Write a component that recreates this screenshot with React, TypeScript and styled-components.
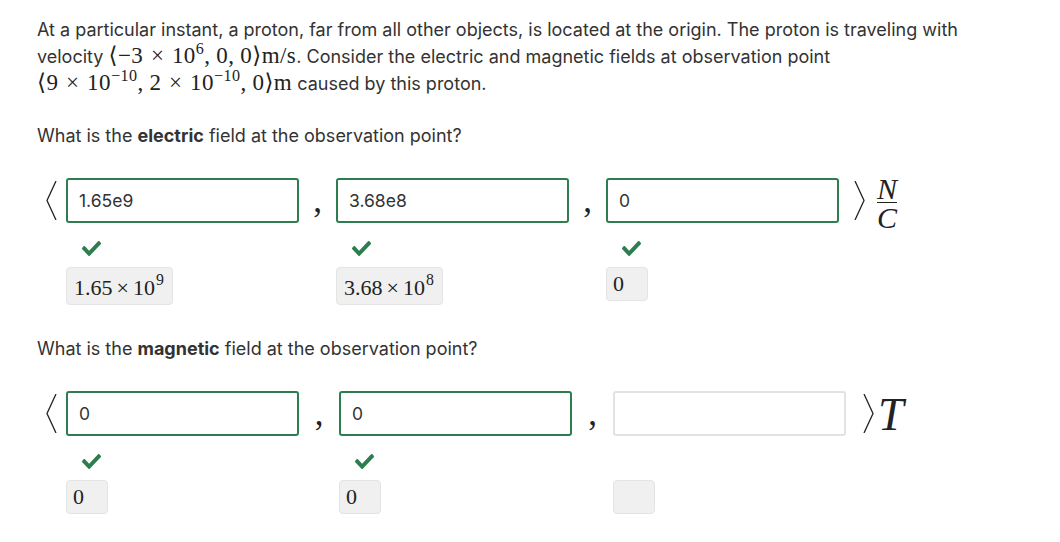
import styled, { createGlobalStyle } from 'styled-components';

const GREEN = '#2e7d4f';
const INK = '#333333';

const Global = createGlobalStyle`
    body {
        margin: 0;
        background: #ffffff;
        color: ${INK};
        font-family: Inter, 'Noto Sans', sans-serif;
    }
`;

const Page = styled.div`
    padding: 15.5px 37px 20px;
`;

const Text = styled.p`
    margin: 0;
    font-size: 18px;
    line-height: 27px;
    max-width: 960px;
`;

const M = styled.span`
    font-family: 'Liberation Serif', 'DejaVu Serif', serif;
    font-size: 23px;
    line-height: 1;
    letter-spacing: 0.02em;
    white-space: nowrap;
    color: #222;
`;

const Op = styled.span`
    margin: 0 0.33em;
`;

const Comma = styled.span`
    margin-right: 0.25em;
`;

const Sup = styled.sup`
    font-size: 0.7em;
    line-height: 0;
    vertical-align: 0.55em;
`;

const Prompt = styled.p`
    margin: 25px 0 29.5px;
    font-size: 18px;
    line-height: 27px;
    b {
        font-weight: 700;
    }
`;

const AnswerRow = styled.div`
    display: flex;
    align-items: flex-start;
    padding-bottom: 4.5px;
`;

const Delim = styled.div<{ $w: number; $pad?: number }>`
    box-sizing: border-box;
    width: ${(p) => p.$w}px;
    height: 45px;
    padding-left: ${(p) => p.$pad ?? 0}px;
    display: flex;
    align-items: center;
    justify-content: ${(p) => (p.$pad ? 'flex-start' : 'center')};
    flex-shrink: 0;
`;

const Sep = styled.div<{ $w: number }>`
    width: ${(p) => p.$w}px;
    height: 45px;
    line-height: 45px;
    text-align: center;
    font-family: 'Liberation Serif', serif;
    font-size: 35px;
    color: #222;
    flex-shrink: 0;
`;

const Field = styled.div`
    display: flex;
    flex-direction: column;
    align-items: flex-start;
`;

const Input = styled.div<{ $filled: boolean }>`
    box-sizing: border-box;
    width: 233px;
    height: 45px;
    border: 2px solid ${(p) => (p.$filled ? GREEN : '#e2e2e2')};
    border-radius: 3px;
    padding: 0 11px;
    display: flex;
    align-items: center;
    font-size: 17.5px;
    color: ${INK};
`;

const CheckWrap = styled.div<{ $hidden?: boolean }>`
    margin: 18px 0 0 16px;
    height: 15px;
    visibility: ${(p) => (p.$hidden ? 'hidden' : 'visible')};
    svg {
        display: block;
    }
`;

const Result = styled.div<{ $tall?: boolean }>`
    box-sizing: border-box;
    margin-top: 11px;
    min-width: 42px;
    height: ${(p) => (p.$tall ? 38 : 34)}px;
    padding: ${(p) => (p.$tall ? '4px 8px 0 7px' : '0 6px')};
    background: #f0f0f0;
    border: 1px solid #e4e4e4;
    border-radius: 4px;
    display: flex;
    align-items: center;
    font-family: 'Liberation Serif', serif;
    font-size: 22px;
    color: #222;
`;

const Times = styled.span`
    margin: 0 4px;
`;

const ResSup = styled.sup`
    font-size: 0.72em;
    line-height: 0;
    vertical-align: 0.62em;
    margin-left: 1px;
`;

const Unit = styled.div<{ $gap: number }>`
    height: 45px;
    margin-left: ${(p) => p.$gap}px;
    display: flex;
    align-items: center;
    font-family: 'Liberation Serif', serif;
    font-style: italic;
    color: #222;
`;

const Frac = styled.span`
    display: inline-flex;
    flex-direction: column;
    align-items: center;
    font-size: 30px;
    line-height: 22px;
    margin-top: 6px;
    padding: 0 3px;
    hr {
        width: 100%;
        margin: 2px 0 4px;
        border: 0;
        border-top: 1.5px solid #222;
    }
`;

const BigT = styled.span`
    font-size: 46px;
    line-height: 45px;
    margin-top: 2px;
`;

const Bracket = ({ right }: { right?: boolean }) => (
    <svg width="11" height="39" viewBox="0 0 11 39">
        <polyline
            points={right ? '1,0 10,19.5 1,39' : '10,0 1,19.5 10,39'}
            fill="none"
            stroke="#222"
            strokeWidth="1.3"
        />
    </svg>
);

const Check = ({ hidden }: { hidden?: boolean }) => (
    <CheckWrap $hidden={hidden}>
        <svg width="19" height="15" viewBox="0 64 512 384" preserveAspectRatio="none">
            <path
                fill={GREEN}
                d="M173.9 439.4l-166.4-166.4c-10-10-10-26.2 0-36.2l36.2-36.2c10-10 26.2-10 36.2 0L192 312.7 432.1 72.6c10-10 26.2-10 36.2 0l36.2 36.2c10 10 10 26.2 0 36.2l-294.4 294.4c-10 10-26.2 10-36.2 0z"
            />
        </svg>
    </CheckWrap>
);

type Ans = { value: string; mant?: string; exp?: string; checked: boolean };

const Answer = ({ a }: { a: Ans }) => (
    <Field>
        <Input $filled={a.value !== ''}>{a.value}</Input>
        <Check hidden={!a.checked} />
        <Result $tall={!!a.exp}>
            <span>
                {a.exp ? (
                    <>
                        {a.mant}
                        <Times>×</Times>10
                        <ResSup>{a.exp}</ResSup>
                    </>
                ) : (
                    a.value
                )}
            </span>
        </Result>
    </Field>
);

const electric: Ans[] = [
    { value: '1.65e9', mant: '1.65', exp: '9', checked: true },
    { value: '3.68e8', mant: '3.68', exp: '8', checked: true },
    { value: '0', checked: true },
];

const magnetic: Ans[] = [
    { value: '0', checked: true },
    { value: '0', checked: true },
    { value: '', checked: false },
];

export default function App() {
    return (
        <Page>
            <Global />
            <Text>
                At a particular instant, a proton, far from all other objects, is located at the origin. The
                proton is traveling with velocity{' '}
                <M>
                    ⟨−3<Op>×</Op>10<Sup>6</Sup>
                    <Comma>,</Comma>0<Comma>,</Comma>0⟩m/s
                </M>
                . Consider the electric and magnetic fields at observation point{' '}
                <M>
                    ⟨9<Op>×</Op>10<Sup>−10</Sup>
                    <Comma>,</Comma>2<Op>×</Op>10<Sup>−10</Sup>
                    <Comma>,</Comma>0⟩m
                </M>{' '}
                caused by this proton.
            </Text>

            <Prompt>
                What is the <b>electric</b> field at the observation point?
            </Prompt>
            <AnswerRow>
                <Delim $w={29}>
                    <Bracket />
                </Delim>
                <Answer a={electric[0]} />
                <Sep $w={37}>,</Sep>
                <Answer a={electric[1]} />
                <Sep $w={37}>,</Sep>
                <Answer a={electric[2]} />
                <Delim $w={26} $pad={15}>
                    <Bracket right />
                </Delim>
                <Unit $gap={9}>
                    <Frac>
                        <span>N</span>
                        <hr />
                        <span>C</span>
                    </Frac>
                </Unit>
            </AnswerRow>

            <Prompt>
                What is the <b>magnetic</b> field at the observation point?
            </Prompt>
            <AnswerRow>
                <Delim $w={29}>
                    <Bracket />
                </Delim>
                <Answer a={magnetic[0]} />
                <Sep $w={40}>,</Sep>
                <Answer a={magnetic[1]} />
                <Sep $w={41}>,</Sep>
                <Answer a={magnetic[2]} />
                <Delim $w={28} $pad={17}>
                    <Bracket right />
                </Delim>
                <Unit $gap={4}>
                    <BigT>T</BigT>
                </Unit>
            </AnswerRow>
        </Page>
    );
}
